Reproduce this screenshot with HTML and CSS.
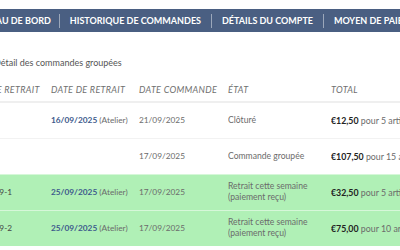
FILE: index.html
```html
<!DOCTYPE html>
<html lang="fr">
<head>
    <meta charset="UTF-8">
    <meta name="viewport" content="width=device-width, initial-scale=1.0">
    <title>Commandes groupées</title>
    <link rel="stylesheet" href="styles.css">
</head>
<body>
    <nav class="topnav">
        <div class="topnav-inner">
            <a href="#">Tableau de bord</a>
            <a href="#">Historique de commandes</a>
            <a href="#">Détails du compte</a>
            <a href="#">Moyen de paiement</a>
        </div>
    </nav>

    <main class="content">
        <h2 class="section-title">Détail des commandes groupées</h2>
        <table class="orders">
            <thead>
                <tr>
                    <th class="col-ref">N° de retrait</th>
                    <th class="col-pickup">Date de retrait</th>
                    <th class="col-date">Date commande</th>
                    <th class="col-state">État</th>
                    <th class="col-total">Total</th>
                </tr>
            </thead>
            <tbody>
                <tr>
                    <td></td>
                    <td><span class="pickup">16/09/2025</span> (Atelier)</td>
                    <td>21/09/2025</td>
                    <td class="state">Clôturé</td>
                    <td class="total"><strong>€12,50</strong> pour 5 articles</td>
                </tr>
                <tr>
                    <td></td>
                    <td></td>
                    <td>17/09/2025</td>
                    <td class="state">Commande groupée</td>
                    <td class="total"><strong>€107,50</strong> pour 15 articles</td>
                </tr>
                <tr class="ready">
                    <td class="ref">#25-09-1</td>
                    <td><span class="pickup">25/09/2025</span> (Atelier)</td>
                    <td>17/09/2025</td>
                    <td class="state">Retrait cette semaine<br>(paiement reçu)</td>
                    <td class="total"><strong>€32,50</strong> pour 5 articles</td>
                </tr>
                <tr class="ready">
                    <td class="ref">#25-09-2</td>
                    <td><span class="pickup">25/09/2025</span> (Atelier)</td>
                    <td>17/09/2025</td>
                    <td class="state">Retrait cette semaine<br>(paiement reçu)</td>
                    <td class="total"><strong>€75,00</strong> pour 10 articles</td>
                </tr>
            </tbody>
        </table>
    </main>
</body>
</html>
```

FILE: styles.css
```css
:root {
    --nav-bg: #4a5f82;
    --text: #6b6b6b;
    --text-dark: #222222;
    --link: #3d5a8c;
    --ready-bg: #b0f0b6;
    --line: #e6e6e6;
}

* {
    box-sizing: border-box;
}

body {
    margin: 0;
    padding-top: 9px;
    font-family: Lato, "Open Sans", sans-serif;
    color: var(--text);
    background: #ffffff;
    overflow: hidden;
}

.topnav {
    background-color: var(--nav-bg);
    height: 23px;
    display: flex;
    align-items: center;
}

.topnav-inner {
    display: flex;
    align-items: center;
    margin-left: -41px;
    white-space: nowrap;
}

.topnav a {
    color: #ffffff;
    text-decoration: none;
    text-transform: uppercase;
    font-weight: 700;
    font-size: 9px;
    padding: 0 10px;
    line-height: 14px;
    border-left: 1px solid rgba(255, 255, 255, 0.45);
}

.topnav a:first-child {
    border-left: none;
    padding-right: 8px;
}

.content {
    margin-left: -6px;
}

.section-title {
    font-size: 9px;
    font-weight: 400;
    color: #555555;
    margin: 24px 0 0;
    line-height: 14px;
}

.orders {
    border-collapse: collapse;
    table-layout: fixed;
    width: 504px;
    margin: 14px 0 0 -17px;
    font-size: 8.3px;
    white-space: nowrap;
}

.orders th {
    font-style: italic;
    font-weight: 400;
    text-transform: uppercase;
    font-size: 9px;
    letter-spacing: 0.3px;
    color: #707070;
    text-align: left;
    padding: 0 0 6px;
    border-bottom: 2px solid #efefef;
}

.orders td {
    height: 36px;
    padding: 0;
    border-top: 1px solid #f2f2f2;
    vertical-align: middle;
    overflow: hidden;
    line-height: 11px;
}

.col-ref { width: 74px; }
.col-pickup { width: 88px; }
.col-date { width: 89px; }
.col-state { width: 103px; }
.col-total { width: 150px; }

.orders td.state {
    font-size: 8.6px;
}

.orders td.total {
    font-size: 8.8px;
}

.orders strong {
    color: var(--text-dark);
}

.pickup {
    color: var(--link);
    font-weight: 700;
}

.orders tr.ready td {
    background-color: var(--ready-bg);
    border-top-color: #d6f7d9;
}

.ref {
    color: #444444;
}
```
